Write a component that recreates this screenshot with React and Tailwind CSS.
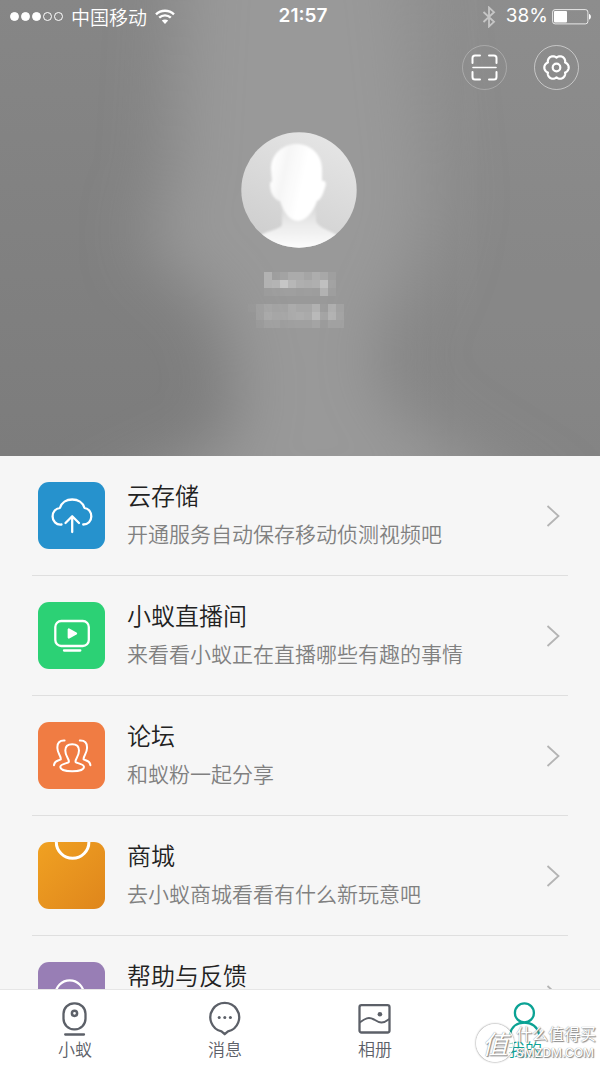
import { useState } from 'react'

const MENU = [
  { id: 'cloud', title: '云存储', desc: '开通服务自动保存移动侦测视频吧', tile: 'bg-[#2692cd]', Icon: CloudIcon },
  { id: 'live', title: '小蚁直播间', desc: '来看看小蚁正在直播哪些有趣的事情', tile: 'bg-[#2cd175]', Icon: LiveIcon },
  { id: 'forum', title: '论坛', desc: '和蚁粉一起分享', tile: 'bg-[#f07c43]', Icon: ForumIcon },
  { id: 'shop', title: '商城', desc: '去小蚁商城看看有什么新玩意吧', tile: 'bg-linear-to-br from-[#f0a122] to-[#df861c]', Icon: ShopIcon },
  { id: 'help', title: '帮助与反馈', desc: '', tile: 'bg-[#987eb5]', Icon: HelpIcon },
]

const TABS = [
  { id: 'home', label: '小蚁', Icon: CameraIcon },
  { id: 'messages', label: '消息', Icon: MessageIcon },
  { id: 'album', label: '相册', Icon: AlbumIcon },
  { id: 'mine', label: '我的', Icon: UserIcon },
]

// opacity (in percent) of each 8px block that hides the name and the account id
const NAME_BLOCKS = [
  [25, 6, 10, 18, 18, 12, 20, 15, 6],
  [25, 28, 44, 30, 22, 20, 22, 38, 10],
  [4, 5, 6, 6, 4, 5, 4, 25, 6],
]
const ID_BLOCKS = [
  [2, 9, 14, 11, 11, 18, 14, 14, 24, 4, 22, 10],
  [0, 9, 18, 14, 14, 18, 20, 17, 32, 12, 26, 12],
  [0, 4, 9, 9, 5, 7, 7, 7, 11, 3, 9, 9],
]

// six round lobes with narrow notches between them
const GEAR_PATH = Array.from({ length: 144 }, (_, i) => {
  const a = (i * Math.PI) / 72
  const r = 9.9 + 2.3 * Math.pow(Math.abs(Math.cos(3 * a)), 0.85)
  return `${i ? 'L' : 'M'}${(22.5 + r * Math.cos(a)).toFixed(2)} ${(22.5 + r * Math.sin(a)).toFixed(2)}`
}).join('') + 'Z'

function TileSvg({ children, width = 2.3 }) {
  return (
    <svg viewBox="0 0 67 67" className="size-full" fill="none" stroke="#fff" strokeWidth={width} strokeLinecap="round" strokeLinejoin="round" aria-hidden="true">
      {children}
    </svg>
  )
}

function CloudIcon() {
  return (
    <TileSvg>
      <path d="M23.5 42.5C18 43 14.6 39 14.6 34.500C14.6 30 17.5 26.5 22 25.8C23.5 20.5 28.500 17.5 34.2 17.5S45 20.5 46.4 25.8C50.5 26.5 53.3 30 53.3 34.500C53.3 39 50 42.500 45.2 42.5" />
      <path d="M34.2 50V34.5M27.5 41L34.2 34.3L41 41" />
    </TileSvg>
  )
}

function LiveIcon() {
  return (
    <TileSvg>
      <rect x="17.3" y="19" width="33.5" height="25" rx="6" />
      <path d="M30.8 27.5V35.5L38 31.5Z" fill="#fff" />
      <path d="M26 48.5H42.3" />
    </TileSvg>
  )
}

function ForumIcon() {
  return (
    <TileSvg width={2}>
      <path d="M30.8 40C31.6 37 27.3 35 27.3 28.5C27.3 24.5 30 22.2 34.2 22.2S41 24.5 41 28.5C41 35 36.8 37 37.6 40C38.4 41.6 46 41.5 46 45C46 48 40 49.3 34.2 49.3S22.3 48 22.3 45C22.3 41.5 30 41.6 30.8 40Z" />
      <path d="M26.6 18.5C21.5 18.2 19.2 21 19.4 25.5C19 31.5 23.2 33.5 22.8 37.3C19.5 39.2 16.4 38.5 16 43.2" />
      <path d="M41.8 18.5C46.9 18.2 49.2 21 49 25.5C49.4 31.5 45.2 33.5 45.6 37.3C48.9 39.2 52 38.5 52.4 43.2" />
    </TileSvg>
  )
}

function ShopIcon() {
  return (
    <TileSvg width={3}>
      <path d="M18.3 -1V0A16.3 16.3 0 0 0 50.9 0V-1" />
    </TileSvg>
  )
}

function HelpIcon() {
  return (
    <TileSvg>
      <circle cx="31.7" cy="32.5" r="14.2" />
      <path d="M42 43L50 51" />
    </TileSvg>
  )
}

function NavSvg({ children }) {
  return (
    <svg viewBox="0 0 36 36" className="size-9" fill="none" stroke="currentColor" strokeWidth="2.3" strokeLinecap="round" strokeLinejoin="round" aria-hidden="true">
      {children}
    </svg>
  )
}

function CameraIcon() {
  return (
    <NavSvg>
      <rect x="6.5" y="2.3" width="22" height="26" rx="10.5" />
      <circle cx="17.5" cy="12.3" r="2.6" strokeWidth="2.5" />
      <path d="M8.2 33.5H27" />
    </NavSvg>
  )
}

function MessageIcon() {
  return (
    <NavSvg>
      <path d="M14.5 30.4A14.4 14.4 0 1 1 21 30.4L17.7 33.2Z" />
      <g fill="currentColor" stroke="none">
        <circle cx="12.2" cy="16.4" r="1.5" />
        <circle cx="17.8" cy="16.4" r="1.5" />
        <circle cx="23.4" cy="16.4" r="1.5" />
      </g>
    </NavSvg>
  )
}

function AlbumIcon() {
  return (
    <NavSvg>
      <rect x="2.5" y="4.2" width="30" height="27.3" rx="2" />
      <path d="M3 21.3C8 17.5 11.5 15.5 17 18.5C22.5 22 26 23 32 18.3" strokeWidth="2" />
      <circle cx="22.9" cy="13.2" r="2.3" fill="currentColor" stroke="none" />
    </NavSvg>
  )
}

function UserIcon() {
  return (
    <NavSvg>
      <circle cx="17.4" cy="11.9" r="9.5" />
      <path d="M3 33C4.5 26 10 21.6 17.4 21.6S30.5 26 32 33" />
    </NavSvg>
  )
}

function Mosaic({ rows }) {
  return (
    <div aria-hidden="true">
      {rows.map((row, y) => (
        <div key={y} className="flex">
          {row.map((value, x) => (
            <span key={x} className="size-2 bg-white" style={{ opacity: value / 100 }} />
          ))}
        </div>
      ))}
    </div>
  )
}

function Backdrop() {
  return (
    <svg className="absolute inset-0 size-full" viewBox="0 0 600 456" preserveAspectRatio="none" aria-hidden="true">
      <defs>
        <linearGradient id="wall" x1="0" y1="0" x2="0" y2="1">
          <stop offset="0" stopColor="#868686" />
          <stop offset="1" stopColor="#7c7c7c" />
        </linearGradient>
        <filter id="soft" x="-40%" y="-40%" width="180%" height="180%">
          <feGaussianBlur stdDeviation="32" />
        </filter>
      </defs>
      <rect width="600" height="456" fill="url(#wall)" />
      <rect x="400" y="-80" width="300" height="620" fill="#fff" opacity="0.06" filter="url(#soft)" />
      <g fill="#999" filter="url(#soft)">
        <path d="M185 -80H405L435 190C435 270 395 290 380 370L420 430L560 520H60L230 440C245 390 230 310 190 280C140 260 140 230 170 190Z" />
      </g>
    </svg>
  )
}

function Avatar() {
  return (
    <svg viewBox="0 0 116 116" className="mt-[42px] mr-0.5 size-[116px]" role="img" aria-label="头像">
      <defs>
        <clipPath id="round"><circle cx="58" cy="58" r="57.7" /></clipPath>
        <linearGradient id="plate" x1="0.8" y1="0" x2="0.3" y2="1">
          <stop offset="0" stopColor="#e6e6e6" />
          <stop offset="1" stopColor="#cecece" />
        </linearGradient>
        <linearGradient id="face" x1="0" y1="0.3" x2="1" y2="0.6">
          <stop offset="0" stopColor="#fff" />
          <stop offset="0.25" stopColor="#f6f6f6" />
          <stop offset="0.6" stopColor="#fff" />
        </linearGradient>
        <linearGradient id="neck" x1="0" y1="0" x2="0" y2="1">
          <stop offset="0" stopColor="#d8d8d8" />
          <stop offset="0.4" stopColor="#ebebeb" />
          <stop offset="1" stopColor="#fff" />
        </linearGradient>
        <filter id="edge"><feGaussianBlur stdDeviation="0.9" /></filter>
      </defs>
      <g clipPath="url(#round)">
        <rect width="116" height="116" fill="url(#plate)" />
        <path d="M41 74H75V88C75 95 88 98 98 104V120H18V104C28 98 41 97 41 92Z" fill="url(#neck)" filter="url(#edge)" />
        <path d="M55.5 12C69 12 81 22 81 37V49C85 48 86 52 83.5 57C81.5 64 79 68 76 69C73 79 65 89 57 89C48 89 42 79 39 69C34 68 30 62 29.5 57C28.5 52 29 50 31 49L30 37C30 22 42 12 55.5 12Z" fill="url(#face)" filter="url(#edge)" />
      </g>
    </svg>
  )
}

function StatusBar() {
  return (
    <div className="grid h-[33px] grid-cols-3 items-center pr-2 pl-[10px] text-white">
      <div className="flex items-center">
        <div className="flex gap-0.5">
          {[true, true, true, false, false].map((on, i) => (
            <span key={i} className={`size-[9px] rounded-full border border-white ${on ? 'bg-white' : ''}`} />
          ))}
        </div>
        <span className="ml-2 text-[19px] leading-8 font-[350] whitespace-nowrap">中国移动</span>
        <svg viewBox="0 0 20 16" className="ml-2 h-4 w-5" fill="none" stroke="#fff" strokeWidth="2.4" aria-hidden="true">
          <path d="M1 5.3C6 0.6 14 0.6 19 5.3" />
          <path d="M4.2 8.7C7.5 5.6 12.5 5.6 15.8 8.7" />
          <path d="M6.8 11.6C8.7 10 11.3 10 13.2 11.6L10 15Z" fill="#fff" stroke="none" />
        </svg>
      </div>
      <time className="pl-1 text-center font-[Inter,sans-serif] text-[19px] font-semibold">21:57</time>
      <div className="flex items-center justify-end">
        <svg viewBox="0 0 14 22" className="h-[22px] w-[14px] opacity-50" fill="none" stroke="#fff" strokeWidth="1.8" aria-hidden="true">
          <path d="M1.5 6L12 15.8L7 20.5V1.5L12 6.2L1.5 16" />
        </svg>
        <span className="ml-2.5 font-[Inter,sans-serif] text-[19px]">38%</span>
        <svg viewBox="0 0 40 16" className="ml-1 h-4 w-10" aria-hidden="true">
          <rect x="0.6" y="0.6" width="35.3" height="14.3" rx="2.5" fill="none" stroke="#fff" strokeOpacity="0.8" />
          <rect x="2" y="2" width="13" height="11.5" rx="1" fill="#fff" />
          <path d="M37 5C39.5 5.5 39.5 10 37 10.5Z" fill="#fff" />
        </svg>
      </div>
    </div>
  )
}

function Header() {
  return (
    <header className="relative overflow-hidden">
      <Backdrop />
      <div className="relative pb-32">
        <StatusBar />
        <div className="mt-3 flex justify-end gap-[27px] pr-[21px]">
          <button aria-label="扫一扫" className="size-[45px] rounded-full border border-white/25">
            <svg viewBox="1 1 43 43" className="size-full" fill="none" stroke="#fff" strokeWidth="2" strokeLinecap="round">
              <path d="M10.5 18V13Q10.5 10.5 13 10.5H18M27 10.5H32Q34.5 10.5 34.5 13V18M34.5 27V32Q34.5 34.5 32 34.5H27M18 34.5H13Q10.5 34.5 10.5 32V27" />
              <path d="M11 22.5H34" strokeWidth="1.6" />
            </svg>
          </button>
          <button aria-label="设置" className="size-[45px] rounded-full border border-white/50">
            <svg viewBox="1 1 43 43" className="size-full" fill="none" stroke="#fff" strokeWidth="2.2" strokeLinejoin="round">
              <path d={GEAR_PATH} />
              <circle cx="22.5" cy="22.5" r="3.8" />
            </svg>
          </button>
        </div>
        <div className="flex flex-col items-center">
          <Avatar />
          <div className="mt-6"><Mosaic rows={NAME_BLOCKS} /></div>
          <div className="mt-2 pr-2"><Mosaic rows={ID_BLOCKS} /></div>
        </div>
      </div>
    </header>
  )
}

function MenuRow({ title, desc, tile, Icon }) {
  return (
    <li className="border-b border-[#dfdfdf]">
      <a href="#" className="flex items-center py-[21px] pr-2 pl-1.5">
        <span className={`size-[67px] shrink-0 overflow-hidden rounded-[11px] ${tile}`}>
          <Icon />
        </span>
        <span className="ml-[22px] flex-1 whitespace-nowrap">
          <span className="block h-[38px] text-2xl leading-9 font-[350] text-[#222]">{title}</span>
          <span className="block h-[39px] text-[21px] leading-[37px] font-[350] text-[#808080]">{desc}</span>
        </span>
        <svg viewBox="0 0 14 22" className="h-[22px] w-[14px]" fill="none" stroke="#b4b4b4" strokeWidth="1.8" aria-hidden="true">
          <path d="M1.5 1L12.5 11L1.5 21" />
        </svg>
      </a>
    </li>
  )
}

function Watermark() {
  return (
    <div className="pointer-events-none absolute right-1 bottom-1 flex items-center gap-0.5 text-white [text-shadow:0_0_1px_#777,1px_1px_1px_#888]">
      <span className="flex size-[38px] items-center justify-center rounded-full border border-white bg-white/60 text-[26px] leading-none italic shadow-[0_0_2px_#666]">
        值
      </span>
      <span className="flex flex-col">
        <span className="text-[16px] leading-5">什么值得买</span>
        <span className="font-[Inter,sans-serif] text-[12px] leading-5 font-medium">SMZDM.COM</span>
      </span>
    </div>
  )
}

export default function App() {
  const [tab, setTab] = useState('mine')

  return (
    <div className="relative flex h-screen flex-col bg-[#f6f6f6] font-['Noto_Sans_CJK_SC',sans-serif]">
      <main className="min-h-0 flex-1 overflow-hidden">
        <Header />
        <ul className="px-8">
          {MENU.map(item => <MenuRow key={item.id} {...item} />)}
        </ul>
      </main>

      {/* Bottom nav */}
      <nav className="flex border-t border-[#e6e6e6] bg-white pt-[11px] pb-2">
        {TABS.map(({ id, label, Icon }) => (
          <button
            key={id}
            onClick={() => setTab(id)}
            className={`flex flex-1 flex-col items-center gap-0.5 text-[17px] leading-5 font-[350] ${
              tab === id ? 'text-[#0ba294]' : 'text-[#5c6068]'
            }`}
          >
            <Icon />
            {label}
          </button>
        ))}
      </nav>

      <Watermark />
    </div>
  )
}
